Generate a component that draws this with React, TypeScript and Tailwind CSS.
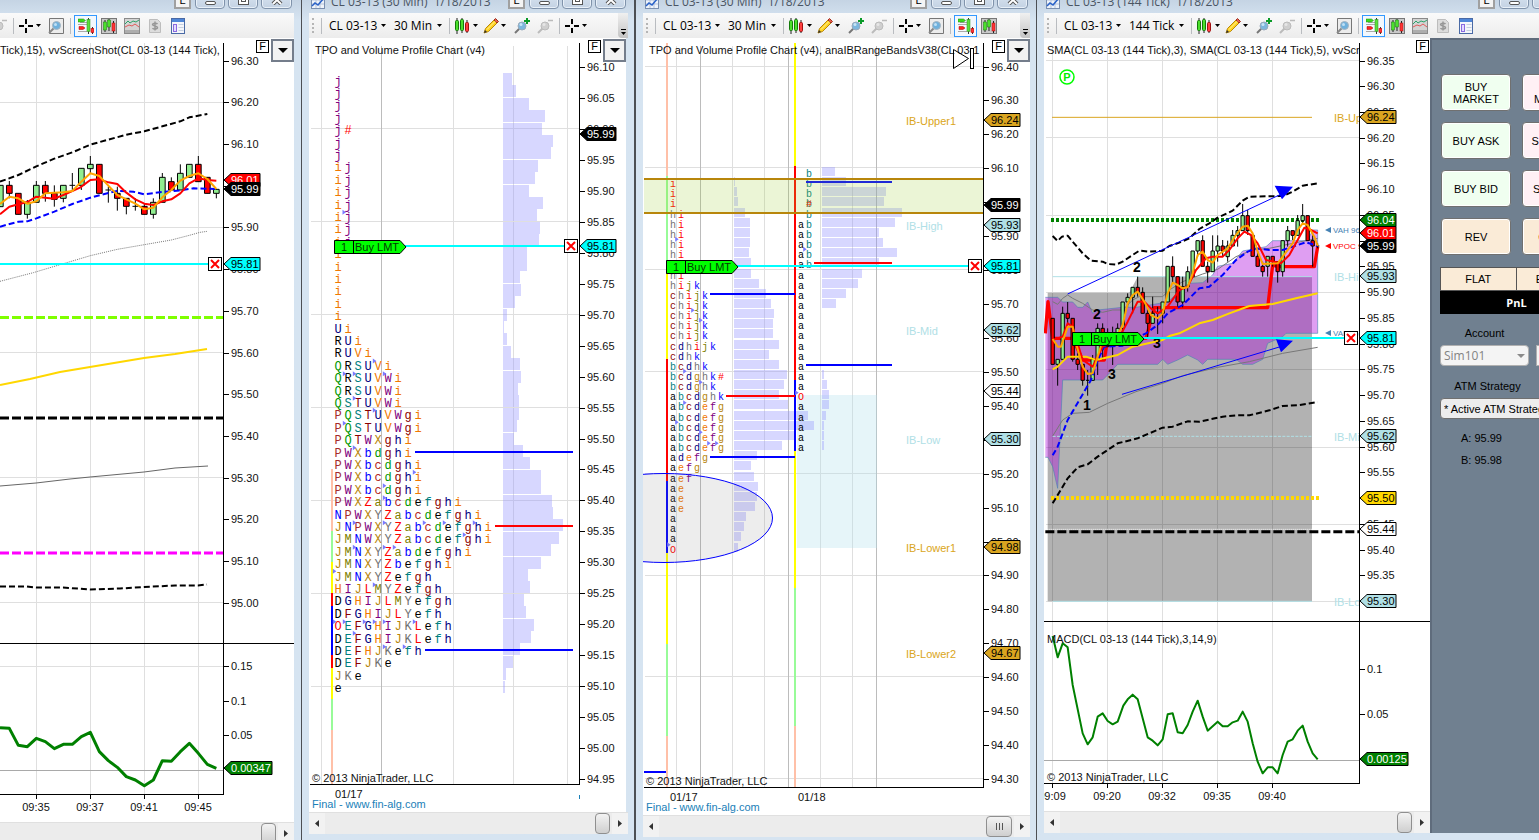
import type { ReactNode } from "react";

type Tag = { y: number; text: string; fill: string; color?: string; w?: number };
type Tick = [string, number];
type Candle = [x: number, top: number, bottom: number, kind: "u" | "d" | "n", high: number, low: number];

const GRID = "#dfdfdf";
const GRID_DARK = "#bcbcbc";
const BAR = "rgba(150,150,255,0.38)";
const POWDER = "#b0e0e6";
const GOLDENROD = "#daa520";

const priceTicks = (from: number, step: number, count: number, y0: number, dy: number): Tick[] =>
  Array.from({ length: count }, (_, i) => [(from - i * step).toFixed(2), y0 + i * dy]);

/* ---------- chart primitives ---------- */

function ChartSvg({ box, className, children }: { box: string; className: string; children: ReactNode }) {
  return (
    <svg
      viewBox={box}
      preserveAspectRatio="xMinYMin slice"
      fontFamily="'Liberation Sans', Arial, sans-serif"
      fontSize="11"
      className={`block shrink-0 bg-white ${className}`}
    >
      {children}
    </svg>
  );
}

function Label({ x, y, fill = "#111", children, ...rest }: { x: number; y: number; fill?: string; children: ReactNode; [k: string]: unknown }) {
  return (
    <text x={x} y={y + 4} fill={fill} {...rest}>
      {children}
    </text>
  );
}

function Lines({ v = [], h = [], x1, x2, y1, y2, stroke = GRID }: { v?: number[]; h?: number[]; x1: number; x2: number; y1: number; y2: number; stroke?: string }) {
  return (
    <g fill={stroke} shapeRendering="crispEdges">
      {v.map((x) => (
        <rect key={`v${x}`} x={x} y={y1} width={1} height={y2 - y1} />
      ))}
      {h.map((y) => (
        <rect key={`h${y}`} x={x1} y={y} width={x2 - x1} height={1} />
      ))}
    </g>
  );
}

function Axis({ x, ticks }: { x: number; ticks: Tick[] }) {
  return (
    <g>
      {ticks.map(([text, y]) => (
        <g key={text}>
          <rect x={x} y={Math.round(y)} width={6} height={1} fill="#000" />
          <Label x={x + 8} y={Math.round(y)}>{text}</Label>
        </g>
      ))}
    </g>
  );
}

function Tags({ x, tags }: { x: number; tags: Tag[] }) {
  return (
    <g>
      {tags.map(({ y, text, fill, color = "#000", w = 37 }) => (
        <g key={text}>
          <path d={`M${x + 1} ${y}L${x + 8} ${y - 6.5}H${x + w}V${y + 6.5}H${x + 8}Z`} fill={fill} stroke="#000" />
          <Label x={x + 8} y={y} fill={color}>{text}</Label>
        </g>
      ))}
    </g>
  );
}

function CloseBox({ x, y }: { x: number; y: number }) {
  return (
    <g>
      <rect x={x + 0.5} y={y - 6.5} width={13} height={13} fill="#fff" stroke="#000" />
      <path d={`M${x + 3} ${y - 4}l8 8m0 -8l-8 8`} stroke="#f00" strokeWidth="2" />
    </g>
  );
}

function Order({ x, y, to }: { x: number; y: number; to: number }) {
  return (
    <g>
      <rect x={x + 70} y={y - 1} width={to - x - 70} height={2} fill="#0ff" />
      <path d={`M${x + 0.5} ${y - 5.5}H${x + 66}L${x + 72} ${y + 1}L${x + 66} ${y + 7.5}H${x + 0.5}Z`} fill="#0f0" stroke="#000" />
      <path d={`M${x + 19.5} ${y - 5}v12`} stroke="#000" />
      <Label x={x + 7} y={y + 1} fill="#003c00">1</Label>
      <Label x={x + 21} y={y + 1} fill="#003c00">Buy LMT</Label>
      <CloseBox x={to} y={y} />
    </g>
  );
}

function Candles({ data, w }: { data: Candle[]; w: number }) {
  return (
    <g stroke="#000" strokeWidth="3">
      {data.map(([x, top, bottom, kind, high, low]) => (
        <g key={x}>
          <path d={`M${x} ${high}V${low}`} />
          {kind === "n" ? (
            <path d={`M${x - w / 2} ${top}h${w}`} />
          ) : (
            <rect x={x - w / 2} y={top} width={w} height={bottom - top} fill={kind === "u" ? "#90ee90" : "#f00"} />
          )}
        </g>
      ))}
    </g>
  );
}

/* Letters of a market profile, one column per half hour */
function Profile({ rows, x, y, dx, dy, size, colors }: { rows: string[]; x: number; y: number; dx: number; dy: number; size: number; colors: Record<string, string> }) {
  return (
    <g fontFamily="'Liberation Mono', 'Courier New', monospace" fontSize={size} textAnchor="middle">
      {rows.map((row, r) =>
        row.split("").map((ch, c) =>
          ch === " " ? null : (
            <text key={`${r}-${c}`} x={x + c * dx} y={y + r * dy + 3} fill={colors[ch]}>
              {ch}
            </text>
          ),
        ),
      )}
    </g>
  );
}

function Volume({ widths, x, y, dy, h }: { widths: number[]; x: number; y: number; dy: number; h: number }) {
  return (
    <g fill={BAR} shapeRendering="crispEdges">
      {widths.map((w, i) => (
        <rect key={i} x={x} y={Math.round(y + i * dy)} width={w} height={h} />
      ))}
    </g>
  );
}

function Segments({ x, w, parts }: { x: number; w: number; parts: [number, number, string][] }) {
  return (
    <g>
      {parts.map(([a, b, fill]) => (
        <rect key={a} x={x} y={a} width={w} height={b - a} fill={fill} />
      ))}
    </g>
  );
}

function Marks({ points, ox, oy }: { points: [number, number][]; ox: number; oy: number }) {
  return (
    <g fill="#7b7bff">
      {points.map(([a, b]) => (
        <path key={`${a}-${b}`} d={`M${ox + a / 3 - 1.5} ${oy + b / 3 - 2.5}l3.5 2.5l-3.5 2.5z`} />
      ))}
    </g>
  );
}

/* ---------- toolbar icons ---------- */

function Caret() {
  return (
    <svg viewBox="0 0 5 3" className="pointer-events-none h-[3px] w-[5px] shrink-0">
      <path d="M0 0h5L2.5 3z" fill="#000" />
    </svg>
  );
}

function Icon({ children }: { children: ReactNode }) {
  return (
    <svg viewBox="0 0 16 16" className="h-4 w-4 shrink-0">
      {children}
    </svg>
  );
}

const BarsIcon = () => (
  <Icon>
    <path d="M3 0v16M8 0v15M13 2v13" stroke="#1f1f1f" />
    <rect x="1.5" y="2.5" width="3" height="10" rx="1" fill="#4be02c" stroke="#157a0a" />
    <rect x="6.5" y="1.5" width="3" height="11" rx="1" fill="#4be02c" stroke="#157a0a" />
    <rect x="11.5" y="4.5" width="3" height="9" rx="1" fill="#ff4040" stroke="#a01010" />
  </Icon>
);

const PencilIcon = () => (
  <Icon>
    <path d="M1 15l1.5-4.5L11 2l3 3-8.5 8.5z" fill="#ffd21f" stroke="#b8860b" />
    <path d="M11 2l1.5-1.5 3 3L14 5z" fill="#e8604c" stroke="#a03020" />
    <path d="M1 15l1-3 2 2z" fill="#333" />
    <path d="M4 11.5L12 3.5" stroke="#fff3a0" />
  </Icon>
);

function LensIcon({ sign }: { sign: "+" | "-" }) {
  const on = sign === "+";
  return (
    <Icon>
      <path d="M1 15l4.500-4.500" stroke={on ? "#777" : "#bbb"} strokeWidth="2" />
      <circle cx="8" cy="8" r="4" fill={on ? "#7db7dd" : "#cfcfcf"} stroke={on ? "#9ab" : "#bbb"} />
      <circle cx="7" cy="6.5" r="1.5" fill={on ? "#c8e4f5" : "#e6e6e6"} />
      {on ? <path d="M13 0v6M10 3h6" stroke="#0a9a28" strokeWidth="2" /> : <path d="M11 2.5h5" stroke="#bbb" strokeWidth="1.5" />}
    </Icon>
  );
}

const CrossIcon = () => (
  <svg viewBox="0 0 14 14" className="h-3.5 w-3.5 shrink-0">
    <path d="M7 0v5M7 9v5M0 7h5M9 7h5" stroke="#000" strokeWidth="2" />
  </svg>
);

const PageLensIcon = () => (
  <Icon>
    <path d="M1.5 0.5h14v15h-14z" fill="#ececec" stroke="#777" />
    <path d="M1 15l5-5" stroke="#888" strokeWidth="2" />
    <circle cx="8.5" cy="7.5" r="4" fill="#6fb1dd" stroke="#a5b4c0" />
    <circle cx="7.5" cy="6.5" r="1.5" fill="#bfe0f5" />
  </Icon>
);

const TraderIcon = () => (
  <Icon>
    <path d="M0 6.5h9M0 13.500h9M2 4.500h8" stroke="#aaa" />
    <path d="M0 1h5.5l2 1.500-2 1.500H0z" fill="#3ddc1c" stroke="#1a8a0a" strokeWidth="0.5" />
    <path d="M1 8.500h4l2 1.500-2 1.500H1z" fill="#f22" stroke="#a00" strokeWidth="0.5" />
    <path d="M10.500 0v16M14.500 9v7" stroke="#333" />
    <rect x="9" y="1.5" width="3" height="12" fill="#5be03c" stroke="#2a8a1a" strokeWidth="0.5" />
    <rect x="13" y="10.5" width="3" height="4" fill="#f33" stroke="#a00" strokeWidth="0.5" />
  </Icon>
);

const PanelBarsIcon = () => (
  <Icon>
    <rect x="0.5" y="0.5" width="15" height="15" fill="#c8c8c8" stroke="#777" />
    <path d="M4 2v12M8 1v12M12.500 3v12" stroke="#222" />
    <rect x="2.5" y="4" width="3" height="8" fill="#4be02c" stroke="#157a0a" strokeWidth="0.5" />
    <rect x="6.5" y="2" width="3" height="7" fill="#4be02c" stroke="#157a0a" strokeWidth="0.5" />
    <rect x="11" y="5" width="3" height="8" fill="#f33" stroke="#a01010" strokeWidth="0.5" />
  </Icon>
);

const LineIcon = () => (
  <Icon>
    <rect x="0.5" y="0.5" width="15" height="15" fill="#d4d4d4" stroke="#8a8a8a" />
    <path d="M1 12h14v3H1z" fill="#adadad" />
    <path d="M1 6l3-3 2 2 3-2 3 1 3-2" fill="none" stroke="#2ba36a" />
    <path d="M1 9l4-2 3 1 3-2 4 3" fill="none" stroke="#e05a5a" />
  </Icon>
);

const DollarIcon = () => (
  <Icon>
    <path d="M2.5 1.5h8l3 3v10h-11z" fill="#dcdcdc" stroke="#bdbdbd" />
    <path d="M10.5 6c-1-1.200-5-1.200-5 .6s5 1.100 5 3-4 1.900-5 .5M8 3.500v9" fill="none" stroke="#979797" strokeWidth="1.5" />
  </Icon>
);

const GridIcon = () => (
  <Icon>
    <rect x="1.5" y="0.5" width="13" height="15" fill="#f4f6fb" stroke="#4a6aa5" />
    <path d="M2 1h12v3H2z" fill="#4f86d8" />
    <rect x="3.5" y="6.5" width="3" height="7" fill="#e4dcff" stroke="#8a6ae0" />
    <path d="M8.500 6.500h5M8.500 9.500h5M8.500 12.500h5" stroke="#c5cfdf" />
  </Icon>
);

function Sep({ className = "" }: { className?: string }) {
  return <span className={`h-4 w-px shrink-0 bg-[#b9bcc0] ${className}`} />;
}

function ToolButton({ label, className = "w-[23px] justify-center", children }: { label: string; className?: string; children: ReactNode }) {
  return (
    <button aria-label={label} className={`flex h-[22px] shrink-0 items-center ${className}`}>
      {children}
    </button>
  );
}

function ToolSelect({ label, value, className, caret }: { label: string; value: string; className: string; caret: string }) {
  return (
    <span className={`relative flex shrink-0 items-center ${className}`}>
      <select aria-label={label} defaultValue={value} className="w-full appearance-none bg-transparent text-xs text-black">
        <option>{value}</option>
      </select>
      <span className={`pointer-events-none absolute inset-y-0 flex items-center ${caret}`}>
        <Caret />
      </span>
    </span>
  );
}

function Toolbar({ interval, level, end = false }: { interval: string; level: 1 | 2 | 3; end?: boolean }) {
  return (
    <div className={`flex h-[25px] shrink-0 overflow-hidden bg-gradient-to-b from-[#fafafa] to-[#ececec] ${end ? "justify-end pr-[105px]" : ""}`}>
      <div className="flex shrink-0 items-center">
        <span className="ml-[3px] mr-1.5 h-[15px] w-[3px] border-l-2 border-dotted border-[#b5b5b5]" />
        <Sep />
        <ToolSelect label="Instrument" value="CL 03-13" className="w-[66px] pl-[7px]" caret="right-0.5" />
        <ToolSelect label="Interval" value={interval} className={interval === "144 Tick" ? "w-[67px] pl-1.5" : "w-[60px] pl-1.5"} caret="right-1.5" />
        <Sep className="mx-px" />
        <ToolButton label="Chart style" className="w-7 gap-[3px] pl-[3px]"><BarsIcon /><Caret /></ToolButton>
        <ToolButton label="Drawing tools" className="w-[31px] gap-0.5 pl-1"><PencilIcon /><Caret /></ToolButton>
        <ToolButton label="Zoom in"><LensIcon sign="+" /></ToolButton>
        <ToolButton label="Zoom out"><LensIcon sign="-" /></ToolButton>
        <Sep className="ml-[3px]" />
        <ToolButton label="Cross hair" className="w-[30px] gap-[3px] pl-[5px]"><CrossIcon /><Caret /></ToolButton>
        {level > 1 && (
          <>
            <ToolButton label="Zoom to page"><PageLensIcon /></ToolButton>
            <Sep className="mx-[3px]" />
            <ToolButton label="Chart trader" className="w-[23px] justify-center border border-[#3399ff] bg-[#f3f8fd]"><TraderIcon /></ToolButton>
            <ToolButton label="Data series"><PanelBarsIcon /></ToolButton>
          </>
        )}
        {level > 2 && (
          <>
            <ToolButton label="Indicators"><LineIcon /></ToolButton>
            <ToolButton label="Strategies"><DollarIcon /></ToolButton>
            <ToolButton label="Properties"><GridIcon /></ToolButton>
          </>
        )}
      </div>
      {level < 3 && (
        <button aria-label="More tools" className="ml-auto flex w-2.5 flex-col items-center justify-end gap-0.5 rounded-bl bg-gradient-to-b from-[#f0f0f0] to-[#c4c4c4] pb-[3px]">
          <span className="h-px w-[5px] bg-black" />
          <Caret />
        </button>
      )}
    </div>
  );
}

/* ---------- window frame ---------- */

function TitleBar({ title }: { title?: string }) {
  const btn = "flex h-[18px] items-end justify-center rounded-b border border-[#8093ab] bg-gradient-to-b from-[#dbe6f2] to-[#c3d2e3] pb-[3px] shadow-[inset_0_0_0_1px_#e8f0f8]";
  return (
    <div className="h-[13px] shrink-0 overflow-hidden">
      <div className="-mt-[9px] flex h-[22px]">
        {title && (
          <div className="flex items-center gap-1.5 pl-0.5 text-[#4a5563]">
            <svg viewBox="0 0 14 14" className="h-3.5 w-3.5">
              <rect x="0.5" y="0.5" width="13" height="13" fill="#eef3fa" stroke="#7a8fb0" />
              <path d="M1 5h12M1 9h12M5 1v12M9 1v12" stroke="#b5c3da" />
              <path d="M1 11l3-3 3 2 6-7" fill="none" stroke="#2a62c8" strokeWidth="1.5" />
            </svg>
            <span className="whitespace-pre text-xs">{title}</span>
          </div>
        )}
        <div className="ml-auto flex gap-[3px] pr-0.5">
          <button aria-label="Link" className="mr-px flex h-[18px] w-[17px] items-end justify-center border-2 border-[#a0a0a0] bg-[#f4f4f4] font-['Liberation_Sans',sans-serif] text-[11px] leading-[14px] text-black">L</button>
          <button aria-label="Minimize" className={`w-[30px] ${btn}`}><span className="h-1 w-[11px] rounded-sm border border-[#555] bg-white" /></button>
          <button aria-label="Maximize" className={`w-[30px] ${btn}`}><span className="flex h-2.5 w-[11px] items-center justify-center border border-[#555] bg-white"><span className="h-1 w-[5px] border border-[#555]" /></span></button>
          <button aria-label="Close" className={`w-[31px] ${btn}`}>
            <svg viewBox="0 0 12 10" className="h-2.5 w-3"><path d="M2 1l8 8M10 1L2 9" stroke="#555" strokeWidth="4" /><path d="M2 1l8 8M10 1L2 9" stroke="#fff" strokeWidth="2" /></svg>
          </button>
        </div>
      </div>
    </div>
  );
}

function ScrollBar({ thumb = "w-[15px]", grip = false, left = true }: { thumb?: string; grip?: boolean; left?: boolean }) {
  return (
    <div className="flex h-[22px] shrink-0 items-center border-t border-[#e0e0e0] bg-[#ececec]">
      {left && (
        <button aria-label="Scroll left" className="flex h-full w-4 items-center justify-center bg-[#f2f2f2]">
          <svg viewBox="0 0 4 7" className="h-[7px] w-1"><path d="M4 0v7L0 3.5z" fill="#333" /></svg>
        </button>
      )}
      <button aria-label="Scroll position" className={`ml-auto mr-0.5 flex h-[21px] items-center justify-center gap-0.5 rounded-sm border border-[#8f8f8f] bg-gradient-to-b from-[#f3f3f3] to-[#cfcfcf] ${thumb}`}>
        {grip && [0, 1, 2].map((i) => <span key={i} className="h-[7px] w-px bg-[#555]" />)}
      </button>
      <button aria-label="Scroll right" className="flex h-full w-4 items-center justify-center bg-[#f2f2f2]">
        <svg viewBox="0 0 4 7" className="h-[7px] w-1"><path d="M0 0v7L4 3.5z" fill="#333" /></svg>
      </button>
    </div>
  );
}

function ChartButtons({ menu = true }: { menu?: boolean }) {
  return (
    <div className="absolute right-0 top-px flex items-start gap-0.5 font-['Liberation_Sans',sans-serif]">
      <button aria-label="Fixed scale" className={`mt-px flex h-[13px] w-[13px] items-center justify-center border border-black bg-white text-[11px] leading-none text-black ${menu ? "" : "mr-px"}`}>F</button>
      {menu && (
        <button aria-label="Open panel" className="flex h-[23px] w-[23px] items-center justify-center border-2 border-[#747d8b] bg-[#f2f2f2]">
          <svg viewBox="0 0 10 5" className="h-[5px] w-2.5"><path d="M0 0h10L5 5z" fill="#000" /></svg>
        </button>
      )}
    </div>
  );
}

function ChartWindow({ title, className, children }: { title?: string; className: string; children: ReactNode }) {
  return (
    <section className={`flex min-h-screen flex-col overflow-hidden border-[#4c4f54] bg-gradient-to-b from-[#c5d4e4] to-[#d6e4f1] to-[20px] ${className}`}>
      <TitleBar title={title} />
      {children}
    </section>
  );
}

/* ---------- chart 1: tick chart ---------- */

const TICK_CANDLES: Candle[] = [
  [1, 556, 620, "u", 556, 620], [28, 556, 580, "d", 543, 595], [55, 580, 643, "d", 580, 643], [82, 607, 643, "u", 600, 656],
  [109, 556, 607, "u", 543, 607], [136, 556, 580, "d", 543, 605], [163, 580, 598, "d", 556, 620], [190, 556, 595, "u", 556, 607],
  [217, 556, 556, "n", 519, 570], [244, 505, 556, "u", 505, 570], [271, 493, 506, "u", 468, 519], [298, 493, 580, "d", 493, 580],
  [325, 570, 570, "n", 560, 608], [352, 580, 595, "d", 560, 632], [379, 595, 619, "d", 595, 643], [406, 619, 619, "n", 595, 632],
  [433, 619, 643, "d", 610, 643], [460, 607, 643, "u", 595, 656], [487, 532, 607, "u", 519, 607], [514, 545, 570, "d", 532, 570],
  [541, 520, 570, "u", 493, 570], [568, 493, 532, "u", 493, 532], [595, 493, 545, "d", 468, 545], [622, 532, 580, "d", 532, 580],
  [649, 568, 580, "u", 568, 595],
];

function TickChart() {
  return (
    <ChartSvg box="0 38 294 784" className="h-[784px] w-[294px]">
      <Lines v={[36, 90, 144, 198]} h={[102, 227, 352, 477, 602, 666]} x1={0} x2={223} y1={43} y2={794} />
      <rect x={0} y={770} width={223} height={1} fill="#a9a9a9" />
      <path d="M0 385L30 379L60 372L90 367L144 358L175 354L207 349" fill="none" stroke="#ffd700" strokeWidth="2" />
      <path d="M0 486L36 483L70 479L90 477L144 472L175 468L208 466" fill="none" stroke="#666" />
      <path d="M0 317.5H223" stroke="#7fff00" strokeWidth="3" strokeDasharray="9 3" />
      <path d="M0 418H223" stroke="#000" strokeWidth="3" strokeDasharray="9 3" />
      <path d="M0 553H223" stroke="#f0f" strokeWidth="3" strokeDasharray="9 3" />
      <path d="M0 586.5L27 586.5L36 587.5L63 587.5L90 589.5L120 588.5L144 587L175 585.5L198 585.5L207 584.5" fill="none" stroke="#000" strokeWidth="2" strokeDasharray="6 3" />
      <g transform="scale(0.333333)" fill="none" strokeLinejoin="round">
        <path d="M0 844L100 818L160 800L271 767L352 748L433 734L514 720L568 706L600 697L622 694" stroke="#777" strokeWidth="3" strokeDasharray="3 3" />
        <path d="M0 545L55 525L109 499L163 476L217 457L271 434L325 419L379 404L433 394L487 379L541 364L568 352L622 342" stroke="#000" strokeWidth="6" strokeDasharray="18 9" />
        <Candles data={TICK_CANDLES} w={17} />
        <path d="M0 680L55 665L82 664L109 655L163 635L217 612L271 593L325 579L352 573L400 575L433 583L487 576L541 571L580 565L649 567" stroke="#00f" strokeWidth="6" strokeDasharray="18 9" />
        <path d="M0 643L28 620L55 613L82 606L109 590L163 596L190 585L240 563L271 540L298 538L325 547L352 552L379 578L406 598L433 611L460 615L487 604L514 598L541 580L568 550L595 535L622 540L649 542" stroke="#f00" strokeWidth="6" />
        <path d="M0 612L28 590L55 595L82 611L109 604L136 580L163 578L190 577L217 573L244 545L271 520L298 528L325 557L352 585L379 598L406 611L433 628L460 623L487 592L514 570L541 542L568 528L595 520L622 537L649 567" stroke="#ffa500" strokeWidth="6" />
        <path d="M0 2183L28 2185L55 2236L82 2240L109 2215L136 2225L163 2246L190 2233L217 2233L244 2210L271 2197L298 2255L325 2282L352 2302L379 2330L406 2340L433 2357L460 2340L487 2282L514 2284L541 2255L568 2230L595 2260L622 2293L649 2305" stroke="#008000" strokeWidth="9" />
      </g>
      <rect x={0} y={263} width={210} height={2} fill="#0ff" />
      <CloseBox x={208} y={264} />
      <path d="M0 643.5H294M0 794.5H224M223.5 43V794M36.5 794v5M90.5 794v5M144.5 794v5M198.5 794v5" stroke="#000" />
      <Axis x={223} ticks={priceTicks(96.3, 0.1, 14, 60.7, 41.69)} />
      <Axis x={223} ticks={[["0.15", 666], ["0.1", 701], ["0.05", 735]]} />
      <Tags
        x={223}
        tags={[
          { y: 180, text: "96.01", fill: "#f00", color: "#fff" },
          { y: 189, text: "95.99", fill: "#000", color: "#fff" },
          { y: 264, text: "95.81", fill: "#0ff" },
          { y: 768, text: "0.00347", fill: "#008000", color: "#fff", w: 49 },
        ]}
      />
      <Label x={0} y={50}>Tick),15), vvScreenShot(CL 03-13 (144 Tick),</Label>
      {["09:35", "09:37", "09:41", "09:45"].map((t, i) => (
        <Label key={t} x={36 + i * 54} y={807} textAnchor="middle">{t}</Label>
      ))}
    </ChartSvg>
  );
}

/* ---------- chart 2: TPO profile ---------- */

const TPO_COLORS: Record<string, string> = {
  j: "#800080", i: "#f07800", U: "#000080", R: "#000", V: "#f07800", Q: "#009600", S: "#008080", W: "#800080",
  T: "#8b0000", P: "#a52a2a", g: "#8b0000", h: "#000080", X: "#b8860b", b: "#00f", d: "#009600", c: "#b22222",
  Z: "#f00", a: "#808000", e: "#000", f: "#008080", N: "#00f", Y: "#707070", J: "#b8860b", M: "#808000",
  H: "#f07800", I: "#800080", L: "#f00", D: "#000", G: "#000080", F: "#8b0000", E: "#008080", O: "#f00", K: "#707070", "#": "#f00",
};

const TPO_ROWS = [
  "j", "j", "j", "j", "j#", "j", "j", "ij", "ij", "ij", "ij", "ij", "ij", "ij", "i", "i", "i", "i", "i", "i",
  "Ui", "RUi", "RUVi", "QRSUVi", "QRSUVWi", "QRSUVWi", "QSTUVWi", "PQSTUVWgi", "PQSTUVWgi", "PQTWXghi",
  "PWXbdghi", "PWXbcdghi", "PWXbcdghi", "PWXbcdghi", "PWXZabcdefghi", "NPWXYZabcdefghi", "JNPWXYZabcdefghi",
  "JMNWXYZabcdefghi", "JMNXYZabdefghi", "JMNXYZbefghi", "JMNXYZefgh", "HIJLMYZefgh", "DGHIJLMYefgh",
  "DFGHIJLYefh", "OEFGHIJKLefh", "DEFGHIJKLefh", "DEFHJKefh", "DEFJKe", "JKe", "e",
];

const TPO_VOLUME = [
  9, 13, 26, 42, 39, 50, 48, 35, 32, 26, 40, 34, 37, 36, 24, 24, 17, 18, 12, 4, 1, 4, 8, 17, 18, 15, 16, 16, 14, 11,
  20, 27, 38, 38, 49, 50, 60, 56, 48, 38, 25, 27, 21, 23, 31, 28, 17, 10, 3, 2,
];

function TpoChart() {
  return (
    <ChartSvg box="309 38 317 774" className="h-[774px] w-[317px]">
      <Lines v={[321, 453, 513, 567]} h={[128, 221, 314, 407, 500, 593, 686]} x1={311} x2={579} y1={46} y2={784} />
      <Lines v={[381]} x1={0} x2={0} y1={46} y2={784} stroke={GRID_DARK} />
      <Volume widths={TPO_VOLUME} x={503} y={73} dy={12.4} h={12} />
      <Segments
        x={331}
        w={2}
        parts={[
          [469, 531, "#ffc0a8"], [531, 562, "#98fb98"], [562, 593, "#ff0"], [593, 606, "#f00"], [606, 655, "#00f"],
          [655, 668, "#f00"], [668, 699, "#ff0"], [699, 730, "#98fb98"], [730, 784, "#ffc0a8"],
        ]}
      />
      <Profile rows={TPO_ROWS} x={338} y={81.5} dx={10} dy={12.4} size={12} colors={TPO_COLORS} />
      <Marks
        ox={300}
        oy={280}
        points={[
          [132, -203], [223, 243], [133, 281], [163, 281], [253, 281], [163, 355], [223, 391], [133, 430], [163, 503], [343, 577],
          [253, 617], [253, 653], [163, 728], [253, 728], [373, 728], [433, 728], [523, 728], [493, 764], [163, 802], [253, 802],
          [283, 802], [103, 874], [223, 914], [103, 1025], [133, 1025], [193, 1025], [223, 1025], [253, 1025], [343, 1025],
          [163, 1060], [253, 1100], [313, 1100],
        ]}
      />
      <path d="M415 452H573M425 650H573" stroke="#00f" strokeWidth="2" />
      <path d="M495 526H573" stroke="#f00" strokeWidth="2" />
      <path d="M310 784.5H580M579.5 43V784" stroke="#000" />
      <Axis x={579} ticks={priceTicks(96.1, 0.05, 24, 67, 30.96)} />
      <Order x={334} y={246} to={564} />
      <Tags x={579} tags={[{ y: 134, text: "95.99", fill: "#000", color: "#fff" }, { y: 246, text: "95.81", fill: "#0ff" }]} />
      <Label x={315} y={50}>TPO and Volume Profile Chart (v4)</Label>
      <Label x={312} y={778}>© 2013 NinjaTrader, LLC</Label>
      <Label x={335} y={794}>01/17</Label>
      <Label x={312} y={804} fill="#1a80b8">Final - www.fin-alg.com</Label>
      <rect x={579} y={795} width={1} height={4} fill="#1a80b8" />
    </ChartSvg>
  );
}

/* ---------- chart 3: two day profile with range bands ---------- */

const BAND_COLORS: Record<string, string> = {
  h: "#707070", i: "#f00", j: "#808000", k: "#00f", c: "#8b0000", d: "#000080", b: "#008080", g: "#b8860b",
  a: "#000", e: "#f07800", f: "#800080", O: "#f00", "#": "#f00",
};

const DAY1_ROWS = [
  "", "i", "i", "i", "hi", "hi", "hi", "hi", "hi", "hi", "hi", "hijk", "chijk", "chijk", "chijk", "chijk", "chijk",
  "cdhijk", "cdhk", "bcdhk", "bcdghk#", "bcdghk", "abcdghk", "abcdefg", "abcdefg", "abcdefg", "abcdefg", "abcdefg",
  "adefg", "aefg", "aef", "ae", "ae", "ae", "a", "a", "a", "O",
];

const DAY2_ROWS = [
  " b", " b", " b", " b", " b", "ab", "ab", "ab", "ab", "ab", "a", "a", "a", "a", "a", "a", "a", "a", "a", "a", "a", "a",
  "O", "a", "a", "a", "a", "a",
];

const DAY1_VOLUME = [
  0, 1, 3, 4, 11, 16, 16, 16, 15, 17, 17, 25, 32, 37, 40, 39, 39, 45, 35, 45, 53, 50, 45, 54, 74, 80, 61, 48, 23, 17, 20,
  24, 23, 21, 12, 10, 7, 4,
];

const DAY2_VOLUME = [13, 24, 64, 62, 80, 73, 57, 61, 75, 57, 40, 36, 24, 14, 0, 0, 0, 0, 0, 0, 2, 5, 7, 7, 4, 2, 2, 2];

const IB_LABELS: [string, number, string][] = [
  ["IB-Upper1", 121, GOLDENROD], ["IB-High", 226, POWDER], ["IB-Mid", 331, POWDER], ["IB-Low", 440, POWDER],
  ["IB-Lower1", 548, GOLDENROD], ["IB-Lower2", 654, GOLDENROD],
];

function BandsChart() {
  return (
    <ChartSvg box="643 38 387 777" className="h-[777px] w-[387px]">
      <Lines v={[676, 732, 764, 820, 852]} h={[66, 167, 269, 371, 473, 575, 676, 778]} x1={645} x2={983} y1={46} y2={787} />
      <Lines v={[700, 788, 876]} x1={0} x2={0} y1={46} y2={787} stroke={GRID_DARK} />
      <rect x={797} y={395} width={80} height={153} fill="rgba(176,224,235,0.32)" />
      <Volume widths={DAY1_VOLUME} x={734} y={167} dy={10.15} h={9} />
      <Volume widths={DAY2_VOLUME} x={822} y={167} dy={10.15} h={9} />
      <Segments
        x={666}
        w={2}
        parts={[
          [43, 176, "#ffc0a8"], [176, 266, "#98fb98"], [266, 359, "#ff0"], [359, 481, "#f00"], [481, 553, "#00f"],
          [553, 644, "#ff0"], [644, 736, "#98fb98"], [736, 787, "#ffc0a8"],
        ]}
      />
      <Segments
        x={794}
        w={2}
        parts={[
          [43, 166, "#ff0"], [166, 380, "#f00"], [380, 451, "#00f"], [451, 588, "#ff0"], [588, 726, "#98fb98"], [726, 787, "#ffc0a8"],
        ]}
      />
      <Profile rows={DAY1_ROWS} x={673} y={174} dx={8} dy={10.15} size={10} colors={BAND_COLORS} />
      <Profile rows={DAY2_ROWS} x={801} y={174} dx={8} dy={10.15} size={10} colors={BAND_COLORS} />
      <Profile rows={["#"]} x={809} y={204} dx={8} dy={10} size={10} colors={BAND_COLORS} />
      <Marks
        ox={636}
        oy={280}
        points={[
          [122, -122], [506, -92], [170, 91], [194, 121], [146, 274], [194, 307], [146, 368], [122, 427], [194, 457], [218, 490],
          [242, 490], [98, 794], [482, 338],
        ]}
      />
      <path d="M806 182H892M806 365H892M710 294H795M710 457H795M644 772H666" stroke="#00f" strokeWidth="2" />
      <path d="M814 263H892M726 396H795" stroke="#f00" strokeWidth="2" />
      <rect x={644} y={179} width={339} height={34} fill="rgba(154,205,50,0.2)" />
      <path d="M644 179H983M644 213H983" stroke="#b8860b" strokeWidth="2" />
      <ellipse cx={664} cy={518} rx={108.5} ry={44.5} fill="rgba(128,128,128,0.14)" stroke="#00f" />
      {IB_LABELS.map(([text, y, fill]) => (
        <Label key={text} x={906} y={y} fill={fill}>{text}</Label>
      ))}
      <path d="M644 787.5H984M983.5 43V787" stroke="#000" />
      <Axis x={983} ticks={priceTicks(96.4, 0.1, 22, 66.5, 33.93)} />
      <Order x={666} y={266} to={968} />
      <Tags
        x={983}
        tags={[
          { y: 120, text: "96.24", fill: GOLDENROD },
          { y: 205, text: "95.99", fill: "#000", color: "#fff" },
          { y: 225, text: "95.93", fill: POWDER },
          { y: 266, text: "95.81", fill: "#0ff" },
          { y: 330, text: "95.62", fill: POWDER },
          { y: 391, text: "95.44", fill: "#fff" },
          { y: 439, text: "95.30", fill: POWDER },
          { y: 547, text: "94.98", fill: GOLDENROD },
          { y: 653, text: "94.67", fill: GOLDENROD },
        ]}
      />
      <Label x={649} y={50}>TPO and Volume Profile Chart (v4), anaIBRangeBandsV38(CL 03-1</Label>
      <path d="M953.5 49.5V68.5L968.5 58.5Z" fill="none" stroke="#000" />
      <rect x={970.5} y={48.5} width={3} height={20} fill="#fff" stroke="#000" />
      <Label x={646} y={781}>© 2013 NinjaTrader, LLC</Label>
      <Label x={670} y={797}>01/17</Label>
      <Label x={798} y={797}>01/18</Label>
      <Label x={646} y={807} fill="#1a80b8">Final - www.fin-alg.com</Label>
    </ChartSvg>
  );
}

/* ---------- chart 4: 144 tick with trader panel ---------- */

const SMA_CANDLES: Candle[] = [
  [50, 415, 553, "d", 415, 553], [65, 538, 553, "u", 538, 617], [80, 400, 538, "u", 380, 538], [95, 400, 415, "d", 366, 432],
  [110, 415, 538, "d", 415, 545], [125, 538, 553, "d", 520, 570], [140, 553, 601, "d", 553, 617], [155, 601, 601, "n", 570, 647],
  [170, 538, 601, "u", 525, 601], [185, 445, 538, "u", 430, 585], [200, 445, 500, "d", 430, 540], [215, 460, 500, "u", 445, 500],
  [230, 480, 480, "n", 440, 555], [245, 445, 480, "u", 430, 480], [260, 366, 445, "u", 366, 460], [275, 352, 366, "u", 340, 380],
  [290, 322, 352, "u", 322, 400], [305, 322, 337, "d", 290, 350], [320, 337, 400, "d", 322, 400], [335, 400, 430, "d", 385, 475],
  [350, 400, 430, "u", 350, 430], [365, 400, 400, "n", 380, 462], [380, 366, 400, "u", 366, 430], [395, 259, 366, "u", 259, 366],
  [410, 259, 290, "d", 229, 310], [425, 290, 366, "d", 290, 380], [440, 320, 366, "u", 290, 382], [455, 275, 320, "u", 259, 335],
  [470, 213, 290, "u", 213, 290], [485, 182, 213, "u", 182, 230], [500, 182, 259, "d", 166, 259], [515, 259, 275, "d", 245, 308],
  [530, 213, 275, "u", 166, 275], [545, 198, 213, "u", 166, 245], [560, 198, 213, "d", 180, 230], [575, 198, 230, "u", 182, 245],
  [590, 166, 198, "u", 150, 198], [605, 152, 166, "u", 138, 200], [620, 107, 152, "u", 72, 152], [635, 107, 152, "d", 90, 165],
  [650, 166, 229, "d", 166, 229], [665, 229, 259, "d", 215, 259], [680, 259, 275, "d", 245, 290], [695, 229, 259, "u", 229, 290],
  [710, 229, 245, "d", 229, 260], [725, 245, 275, "d", 245, 308], [740, 182, 275, "u", 182, 290], [755, 152, 182, "u", 138, 200],
  [770, 152, 166, "d", 152, 180], [785, 122, 166, "u", 105, 166], [800, 107, 122, "u", 72, 135], [815, 107, 182, "d", 107, 182],
  [830, 182, 198, "d", 166, 260], [845, 198, 198, "n", 190, 205],
];

const WAVES: [string, number, number][] = [["2", 1137, 267], ["2", 1097, 314], ["1", 1087, 405], ["3", 1112, 374], ["3", 1157, 343]];

const VALUE_AREA_TOP = "M28 352L65 352L80 366L110 366L125 382L140 382L155 366L170 400L185 390L260 382L300 382L395 366L455 310L500 308L530 285L545 259L590 250L620 213L690 200L710 182L815 182L830 150L845 150";
const VALUE_AREA_BOTTOM = "L845 460L750 460L740 470L695 490L680 538L650 553L620 553L600 538L515 538L500 553L485 540L455 525L425 540L395 553L380 538L365 553L245 553L215 585L200 600L80 600L65 925L50 860L36 832L28 832";

function SmaChart() {
  return (
    <ChartSvg box="1044 38 386 773" className="h-[773px] w-[386px]">
      <Lines v={[1052, 1107, 1162, 1217, 1272]} h={[60, 137, 215, 292, 369, 447, 524, 601]} x1={1046} x2={1359} y1={46} y2={783} />
      <rect x={1044} y={760} width={315} height={1} fill="#a9a9a9" />
      <svg x={1044} y={38} width={315} height={746} viewBox="1044 38 315 746">
        <g transform="translate(1036 180) scale(0.333333)" fill="none" strokeLinejoin="round">
          <path d="M35 338H280L305 290H828V1264H35Z" fill="rgba(0,0,0,0.3)" />
          <path d={`${VALUE_AREA_TOP}${VALUE_AREA_BOTTOM}Z`} fill="rgba(170,0,220,0.38)" />
          <path d={`${VALUE_AREA_TOP}${VALUE_AREA_BOTTOM}`} stroke="#4682b4" strokeOpacity="0.6" strokeWidth="3" />
          <path d="M50 290H828M50 1264H828" stroke={POWDER} strokeWidth="3" />
          <path d="M50 769H828" stroke={POWDER} strokeWidth="3" strokeDasharray="9 4" />
          <path d="M48 -188H828" stroke={GOLDENROD} strokeWidth="3" />
          <path d="M45 120H850" stroke="#008000" strokeWidth="12" strokeDasharray="9 6" />
          <path d="M45 954H850" stroke="#ffd700" strokeWidth="12" strokeDasharray="9 6" />
          <path d="M28 1048H828" stroke="#fff" strokeWidth="3" strokeDasharray="3 3" />
          <path d="M28 1055H970" stroke="#000" strokeWidth="9" strokeDasharray="27 9" />
          <path d="M50 365L65 373L80 355L95 345L110 355L140 370L170 390L200 397L230 390L260 390L290 360L310 350L380 350L400 330L440 305L500 282L545 268L600 230L650 210L700 205L770 190L845 175" stroke="#777" strokeWidth="3" />
          <path d="M50 768L80 720L110 700L160 697L215 670L300 635L380 610L440 587L545 562L640 545L740 520L845 502" stroke="#777" strokeWidth="3" />
          <path d="M28 460L36 365L50 475L110 475L140 540L205 540L215 475L330 475L342 430L355 383L695 383L710 255L725 260L835 260L845 200" stroke="#f00" strokeWidth="10" />
          <Candles data={SMA_CANDLES} w={10} />
          <path d="M50 568L65 560L95 530L150 530L180 540L245 525L290 500L380 480L400 468L430 460L490 430L530 420L580 400L640 378L710 372L780 355L845 340" stroke="#ffd700" strokeWidth="6" />
          <path d="M50 826L65 800L95 720L130 660L165 600L185 540L205 500L260 497L290 480L330 460L365 435L395 400L440 375L490 325L520 320L560 285L600 240L635 215L660 205L700 210L740 210L770 200L810 187L845 198" stroke="#00f" strokeWidth="6" strokeDasharray="18 9" />
          <path d="M50 480L80 470L95 430L110 440L140 540L170 560L200 500L245 480L275 425L305 365L325 365L345 385L365 400L395 380L430 330L455 320L480 270L510 235L530 230L560 230L580 210L605 175L625 155L645 165L665 190L690 240L735 250L760 225L785 180L805 143L825 150L845 160" stroke="#f00" strokeWidth="6" />
          <path d="M50 477L65 500L75 500L85 470L95 440L110 440L120 490L140 560L155 582L170 580L185 530L200 480L215 470L245 465L260 435L275 370L290 345L305 335L325 365L345 405L365 415L380 400L395 340L410 308L425 315L440 325L455 322L470 280L485 225L500 215L515 240L530 248L545 225L575 205L600 165L620 140L635 137L650 160L665 215L680 252L725 250L740 230L770 190L785 150L800 130L815 135L835 170L845 198" stroke="#ffa500" strokeWidth="6" />
          <path d="M50 168L65 183L78 170L95 167L110 185L140 220L165 242L200 245L215 252L240 254L260 245L290 225L310 212L340 215L380 212L400 198L430 188L460 175L490 147L520 130L545 113L590 92L620 62L640 50L740 48L770 35L800 17L845 10" stroke="#000" strokeWidth="6" strokeDasharray="18 9" />
          <path d="M50 970L65 945L95 895L125 862L155 853L185 830L245 790L305 775L380 743L410 740L455 724L490 725L560 710L600 706L640 706L700 691L740 678L790 675L845 666" stroke="#000" strokeWidth="6" strokeDasharray="18 9" />
          <path d="M95 342L745 38M258 643L750 495" stroke="#00f" strokeWidth="3" />
          <path d="M716 17L771 20L738 58ZM720 478L771 482L735 517Z" fill="#00f" />
          <path transform="translate(0 660)" d="M50 708L65 772L80 730L95 742L110 855L140 1000L155 1033L170 1012L185 950L200 940L215 963L230 973L245 965L262 917L275 898L290 884L305 898L335 1012L350 1022L365 1036L380 1018L395 943L410 940L425 997L440 1000L455 975L470 935L485 902L500 950L515 992L545 965L560 979L575 979L590 967L605 962L620 935L635 965L650 1030L665 1085L680 1120L695 1102L710 1102L725 1120L740 1065L755 1025L770 1018L785 992L800 977L815 1025L830 1060L845 1078" stroke="#008000" strokeWidth="6" />
        </g>
        {WAVES.map(([n, x, y]) => (
          <text key={`${n}-${x}`} x={x} y={y + 5} fontSize="14" fontWeight="700" textAnchor="middle">{n}</text>
        ))}
        <Label x={1334} y={118} fill={GOLDENROD}>IB-Upper1</Label>
        <Label x={1334} y={277} fill={POWDER}>IB-High</Label>
        <Label x={1334} y={437} fill={POWDER}>IB-Mid</Label>
        <Label x={1334} y={602} fill={POWDER}>IB-Low</Label>
        <path d="M1325 230l6-3v6zM1325 333l6-3v6z" fill="#4682b4" />
        <path d="M1325 246l6-3v6z" fill="#f00" />
        <g fontSize="8">
          <text x={1333} y={233} fill="#4682b4">VAH 96.02</text>
          <text x={1333} y={249} fill="#f00">VPOC 95.99</text>
          <text x={1333} y={336} fill="#4682b4">VAL 95.82</text>
        </g>
        <Label x={1047} y={50}>SMA(CL 03-13 (144 Tick),3), SMA(CL 03-13 (144 Tick),5), vvScr</Label>
      </svg>
      <circle cx={1067} cy={77} r={7} fill="none" stroke="#0f0" strokeWidth="1.5" />
      <text x={1067} y={81} fill="#0e0" fontWeight="700" textAnchor="middle">P</text>
      <path d="M1044 621.5H1430M1044 783.5H1360M1359.5 43V783" stroke="#000" />
      <path d="M1052.5 783v5M1107.5 783v5M1162.5 783v5M1217.5 783v5M1272.5 783v5" stroke="#000" />
      <Axis x={1359} ticks={priceTicks(96.35, 0.05, 22, 60.5, 25.74)} />
      <Axis x={1359} ticks={[["0.1", 669], ["0.05", 714]]} />
      <Order x={1072} y={338} to={1344} />
      <Tags
        x={1359}
        tags={[
          { y: 117, text: "96.24", fill: GOLDENROD },
          { y: 220, text: "96.04", fill: "#008000", color: "#fff" },
          { y: 233, text: "96.01", fill: "#f00", color: "#fff" },
          { y: 246, text: "95.99", fill: "#000", color: "#fff" },
          { y: 276, text: "95.93", fill: POWDER },
          { y: 338, text: "95.81", fill: "#0ff" },
          { y: 436, text: "95.62", fill: POWDER },
          { y: 498, text: "95.50", fill: "#ffd700" },
          { y: 529, text: "95.44", fill: "#fff" },
          { y: 601, text: "95.30", fill: POWDER },
          { y: 759, text: "0.00125", fill: "#008000", color: "#fff", w: 49 },
        ]}
      />
      <Label x={1047} y={639}>MACD(CL 03-13 (144 Tick),3,14,9)</Label>
      <Label x={1047} y={777}>© 2013 NinjaTrader, LLC</Label>
      {["09:09", "09:20", "09:32", "09:35", "09:40"].map((t, i) => (
        <Label key={t} x={1052 + i * 55} y={796} textAnchor="middle">{t}</Label>
      ))}
    </ChartSvg>
  );
}

const ORDER_BUTTONS: [string, string][] = [
  ["BUY MARKET", "bg-[#f0fff0]"], ["SELL MARKET", "bg-[#fff0f5]"],
  ["BUY ASK", "bg-[#f0fff0]"], ["SELL ASK", "bg-[#fff0f5]"],
  ["BUY BID", "bg-[#f0fff0]"], ["SELL BID", "bg-[#fff0f5]"],
  ["REV", "bg-[#faebd7]"], ["CLOSE", "bg-[#faebd7]"],
];

function TraderPanel() {
  return (
    <aside className="flex-1 border-l-2 border-t-2 border-[#5f6c7c] bg-[#708090] pl-2 pr-[5px] pt-[34px] font-['Liberation_Sans',sans-serif] text-[11px] leading-3 text-black">
      <div className="grid grid-cols-2 gap-x-[11px] gap-y-[11px] px-px">
        {ORDER_BUTTONS.map(([text, bg]) => (
          <button key={text} className={`flex h-[37px] items-center justify-center rounded-sm border border-[#707070] px-1.5 shadow-[inset_0_0_0_1px_#fff] ${bg}`}>{text}</button>
        ))}
      </div>
      <div className="mt-3 grid grid-cols-2 border border-[#555] bg-[#faebd7]">
        <button className="h-[22px] border-r border-[#555]">FLAT</button>
        <button className="h-[22px]">ENTRY</button>
      </div>
      <div className="flex h-[23px] items-center justify-center bg-black font-['Open_Sans',sans-serif] font-bold text-white">PnL</div>
      <div className="mt-[11px] flex gap-[7px]">
        <div className="w-[89px]">
          <label htmlFor="account" className="block text-center leading-4">Account</label>
          <div className="relative mt-1">
            <select id="account" disabled defaultValue="Sim101" className="h-[21px] w-full appearance-none rounded-sm border border-[#b0b0b0] bg-[#f4f4f4] pl-[3px] font-['Open_Sans',sans-serif] text-xs text-[#838383] opacity-100">
              <option>Sim101</option>
            </select>
            <svg viewBox="0 0 8 4" className="pointer-events-none absolute right-1 top-[9px] h-1 w-2"><path d="M0 0h8L4 4z" fill="#8a8a8a" /></svg>
          </div>
        </div>
        <div className="flex-1">
          <label htmlFor="qty" className="block text-center leading-4">Qty</label>
          <input id="qty" defaultValue="1" className="mt-1 h-[21px] w-full border border-[#b0b0b0] bg-[#f4f4f4] px-1" />
        </div>
      </div>
      <label htmlFor="atm" className="mt-3 block w-[95px] text-center leading-4">ATM Strategy</label>
      <select id="atm" defaultValue="* Active ATM Strategy" className="mt-1 h-[21px] w-full appearance-none rounded-sm border border-[#707070] bg-[#ededed] pl-[3px] text-[11px] text-black">
        <option>* Active ATM Strategy</option>
      </select>
      <div className="ml-[21px] mt-2 leading-[22px]">
        <p>A: 95.99</p>
        <p>B: 95.98</p>
      </div>
    </aside>
  );
}

export default function App() {
  return (
    <main className="flex h-screen w-full overflow-hidden bg-[#d6e4f1] font-['Open_Sans','Noto_Sans',sans-serif]">
      <ChartWindow className="w-[302px] shrink-0 border-r pr-[7px]">
        <Toolbar interval="144 Tick" level={3} end />
        <div className="relative">
          <TickChart />
          <ChartButtons />
        </div>
        <ScrollBar left={false} />
      </ChartWindow>
      <ChartWindow title="CL 03-13 (30 Min)  1/18/2013" className="w-[334px] shrink-0 border-r-2 pl-[7px] pr-1.5">
        <Toolbar interval="30 Min" level={1} />
        <div className="relative mr-0.5">
          <TpoChart />
          <ChartButtons />
        </div>
        <ScrollBar />
      </ChartWindow>
      <ChartWindow title="CL 03-13 (30 Min)  1/18/2013" className="w-[401px] shrink-0 border-r pl-[7px] pr-1.5">
        <Toolbar interval="30 Min" level={2} />
        <div className="relative">
          <BandsChart />
          <ChartButtons />
        </div>
        <ScrollBar thumb="w-[26px]" grip />
      </ChartWindow>
      <ChartWindow title="CL 03-13 (144 Tick)  1/18/2013" className="min-w-[569px] flex-1 pl-[7px] pr-2">
        <Toolbar interval="144 Tick" level={3} />
        <div className="flex">
          <div className="w-[386px] shrink-0">
            <div className="relative">
              <SmaChart />
              <ChartButtons menu={false} />
            </div>
            <ScrollBar />
          </div>
          <TraderPanel />
        </div>
      </ChartWindow>
    </main>
  );
}
